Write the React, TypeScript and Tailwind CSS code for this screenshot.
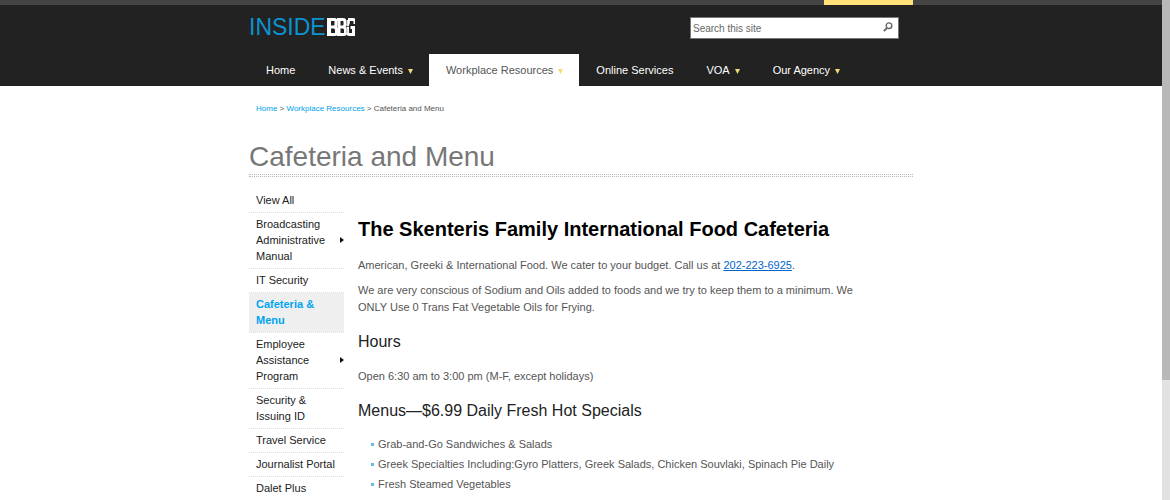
const navItems = [
  { label: "Home", menu: false },
  { label: "News & Events", menu: true },
  { label: "Workplace Resources", menu: true, active: true },
  { label: "Online Services", menu: false },
  { label: "VOA", menu: true },
  { label: "Our Agency", menu: true },
];

const sideItems = [
  { label: "View All" },
  { label: "Broadcasting Administrative Manual", more: true },
  { label: "IT Security" },
  { label: "Cafeteria & Menu", active: true },
  { label: "Employee Assistance Program", more: true },
  { label: "Security & Issuing ID" },
  { label: "Travel Service" },
  { label: "Journalist Portal" },
  { label: "Dalet Plus" },
];

const menuItems = [
  "Grab-and-Go Sandwiches & Salads",
  "Greek Specialties Including:Gyro Platters, Greek Salads, Chicken Souvlaki, Spinach Pie Daily",
  "Fresh Steamed Vegetables",
];

function Logo() {
  return (
    <a href="#" aria-label="Inside BBG" className="flex items-center gap-px">
      <span className="text-[23px] leading-6 text-[#0c93d0]">INSIDE</span>
      <svg viewBox="0 0 28 18" className="h-[18px] w-7" fill="none" stroke="#fff" strokeWidth="3">
        <path d="M2 1.500h5.500q1.500 0 1.500 2v3q0 2-2 2.500H2M7 9q2.500.5 2.500 2.500v3q0 2-2 2H2" />
        <path d="M2 0v18" strokeWidth="4" />
        <path d="M10 1.500h6q2 0 2 2v3q0 2-2 2.500h-4M16 9q2.500.5 2.500 2.500v3q0 2-2 2H10" />
        <path d="M12 0v18" strokeWidth="3" />
        <path d="M28 6V3.500q0-2-2-2h-5M20.500 2q2 2-.5 6M20.500 9v5.500q0 2 2 2h4V9.500H23.500" />
        <path d="M19.800 3.500q.8 3-.8 5.300 1.500 2 .8 6" stroke="#666" strokeWidth=".6" />
      </svg>
    </a>
  );
}

function Header() {
  return (
    <header className="bg-[#222]">
      <div className="h-[5px] bg-[#444]">
        <div className="mx-auto flex h-full max-w-[664px] justify-end">
          <div className="w-[89px] bg-[#ffe27a]" />
        </div>
      </div>
      <div className="mx-auto max-w-[664px]">
        <div className="flex h-[49px] items-start justify-between pt-[10px] pr-[14px]">
          <Logo />
          <form className="mt-[2px] flex h-[22px] w-[209px] items-center border border-[#777] bg-white">
            <input
              type="text"
              aria-label="Search this site"
              placeholder="Search this site"
              className="min-w-0 flex-1 px-[2px] text-[10px] text-[#555] outline-none placeholder:text-[#666]"
            />
            <button type="button" aria-label="Search" className="px-[5px] pb-[2px]">
              <svg viewBox="0 0 10 10" className="h-[10px] w-[10px]" fill="none" stroke="#666">
                <circle cx="6" cy="3.700" r="2.800" strokeWidth="1.400" />
                <path d="M3.900 6L.8 9.200" strokeWidth="1.800" />
              </svg>
            </button>
          </form>
        </div>
        <nav className="flex h-8">
          {navItems.map((item) => (
            <a
              key={item.label}
              href="#"
              className={
                item.active
                  ? "flex items-center bg-white pr-4 pl-[17px] text-[#555]"
                  : "flex items-center pr-4 pl-[17px] text-white"
              }
            >
              {item.label}
              {item.menu && (
                <svg viewBox="0 0 5 5" className="mt-[3px] ml-[5px] h-[5px] w-[5px]" fill="#f3dc78">
                  <path d="M0 0h5L2.500 5z" />
                </svg>
              )}
            </a>
          ))}
        </nav>
      </div>
    </header>
  );
}

function Sidebar() {
  return (
    <ul className="w-[95px] shrink-0 pt-3 leading-4 text-[#222]">
      {sideItems.map((item) => (
        <li key={item.label} className="border-b border-dotted border-[#ddd]">
          <a
            href="#"
            className={
              item.active
                ? "block bg-[#efefef] pt-[3px] pr-6 pb-1 pl-[7px] font-bold text-[#00a4f0]"
                : "flex items-center justify-between pt-[3px] pb-1 pl-[7px]"
            }
          >
            <span>{item.label}</span>
            {item.more && (
              <svg viewBox="0 0 4 6" className="h-[6px] w-[4px] shrink-0" fill="#111">
                <path d="M0 0l4 3-4 3z" />
              </svg>
            )}
          </a>
        </li>
      ))}
    </ul>
  );
}

export default function App() {
  return (
    <div className="flex h-screen overflow-hidden bg-white font-['Liberation_Sans',Arial,sans-serif] text-[11px] text-[#555]">
      <div className="min-w-0 flex-1 overflow-hidden">
        <Header />
        <main className="mx-auto max-w-[664px]">
          <nav aria-label="Breadcrumb" className="px-[7px] pt-[17px] text-[8px] leading-3">
            <a href="#" className="text-[#00a0e8]">Home</a>
            {" > "}
            <a href="#" className="text-[#00a0e8]">Workplace Resources</a>
            {" > "}
            <span>Cafeteria and Menu</span>
          </nav>
          <h1 className="pt-[26px] text-[28px] leading-8 text-[#777]">Cafeteria and Menu</h1>
          <div className="mt-px">
            <div className="border-t border-dotted border-[#bbb]" />
            <div className="mt-px border-t border-dotted border-[#bbb]" />
          </div>
          <div className="flex">
            <Sidebar />
            <article className="min-w-0 flex-1 pt-10 pr-14 pl-[14px]">
              <h2 className="text-[20px] leading-6 font-bold text-black">
                The Skenteris Family International Food Cafeteria
              </h2>
              <p className="mt-4 leading-[17px]">
                American, Greeki &amp; International Food. We cater to your budget. Call us at{" "}
                <a href="tel:2022236925" className="text-[#0066cc] underline">202-223-6925</a>.
              </p>
              <p className="mt-2 leading-[17px]">
                We are very conscious of Sodium and Oils added to foods and we try to keep them to a minimum. We ONLY
                Use 0 Trans Fat Vegetable Oils for Frying.
              </p>
              <h3 className="mt-4 text-[16px] leading-5 text-[#222]">Hours</h3>
              <p className="mt-4 leading-[17px]">Open 6:30 am to 3:00 pm (M-F, except holidays)</p>
              <h3 className="mt-4 text-[16px] leading-5 text-[#222]">Menus—$6.99 Daily Fresh Hot Specials</h3>
              <ul className="mt-[13px] leading-5">
                {menuItems.map((item) => (
                  <li key={item} className="flex items-center gap-1 pl-[13px]">
                    <span className="h-[3px] w-[3px] shrink-0 bg-[#5fbdea]" />
                    {item}
                  </li>
                ))}
              </ul>
            </article>
          </div>
        </main>
      </div>
      <div aria-hidden="true" className="w-2 shrink-0 bg-[#e2e2e2]">
        <div className="h-[76%] bg-[#b8b8b8]" />
      </div>
    </div>
  );
}
